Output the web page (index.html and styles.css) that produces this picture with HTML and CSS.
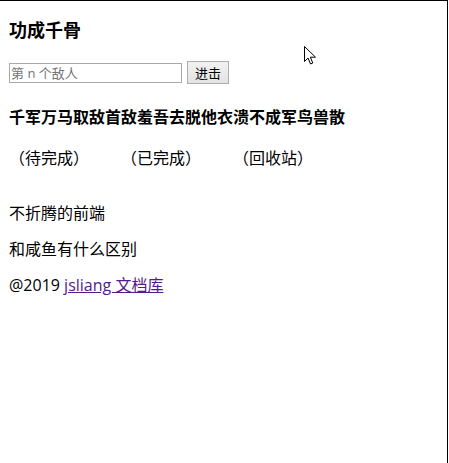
FILE: index.html
```html
<!DOCTYPE html>
<html lang="zh-CN">
<head>
<meta charset="utf-8">
<title>功成千骨</title>
<link rel="stylesheet" href="styles.css">
</head>
<body>
<div class="frame">
  <h3 class="title">功成千骨</h3>
  <div class="form">
    <input class="field" type="text" placeholder="第 n 个敌人">
    <button class="btn" type="button">进击</button>
  </div>
  <h4 class="slogan">千军万马取敌首敌羞吾去脱他衣溃不成军鸟兽散</h4>
  <div class="tabs">
    <span class="tab">（待完成）</span>
    <span class="tab">（已完成）</span>
    <span class="tab">（回收站）</span>
  </div>
  <p class="line first">不折腾的前端</p>
  <p class="line">和咸鱼有什么区别</p>
  <p class="line">@2019 <a class="link" href="#">jsliang 文档库</a></p>
  <svg class="cursor" width="13" height="20" viewBox="0 0 13 20">
    <path d="M0.5 0.5 L0.5 15.5 L4 12 L6.5 18 L8.8 17 L6.3 11.2 L11.5 11.2 Z" fill="#fff" stroke="#000" stroke-width="1" stroke-linejoin="miter"/>
  </svg>
</div>
</body>
</html>
```

FILE: styles.css
```css
html, body {
  margin: 0;
  padding: 0;
  background: #fff;
}
.frame {
  position: relative;
  box-sizing: border-box;
  width: 448px;
  height: 463px;
  border-top: 1px solid #000;
  border-right: 1px solid #000;
  padding: 0 0 0 9px;
  font-family: "Open Sans", "Noto Sans CJK SC", sans-serif;
  color: #000;
  font-size: 16px;
}
.title {
  margin: 17px 0 0;
  font-size: 18px;
  line-height: 24px;
  font-weight: bold;
}
.form {
  display: flex;
  align-items: center;
  gap: 5px;
  margin-top: 19px;
}
.field {
  box-sizing: border-box;
  width: 173px;
  height: 20px;
  margin: 0;
  padding: 0 1px;
  border: 1px solid #a9a9a9;
  font-family: inherit;
  font-size: 13px;
  line-height: 18px;
  color: #000;
}
.field::placeholder {
  color: #757575;
}
.btn {
  box-sizing: border-box;
  width: 42px;
  height: 23px;
  margin: 0;
  padding: 0;
  border: 1px solid #adadad;
  border-radius: 0;
  background: linear-gradient(#f2f2f2, #e3e3e3);
  font-family: inherit;
  font-size: 13px;
  color: #000;
}
.slogan {
  margin: 22px 0 0;
  font-size: 16px;
  line-height: 22px;
  font-weight: bold;
}
.tabs {
  display: flex;
  gap: 32px;
  margin-top: 19px;
  line-height: 22px;
}
.tab {
  width: 80px;
}
.line {
  margin: 16px 0 0;
  line-height: 20px;
}
.line.first {
  margin-top: 34px;
}
.link {
  color: #551a8b;
  text-decoration: underline;
}
.cursor {
  position: absolute;
  left: 304px;
  top: 45px;
}
```
